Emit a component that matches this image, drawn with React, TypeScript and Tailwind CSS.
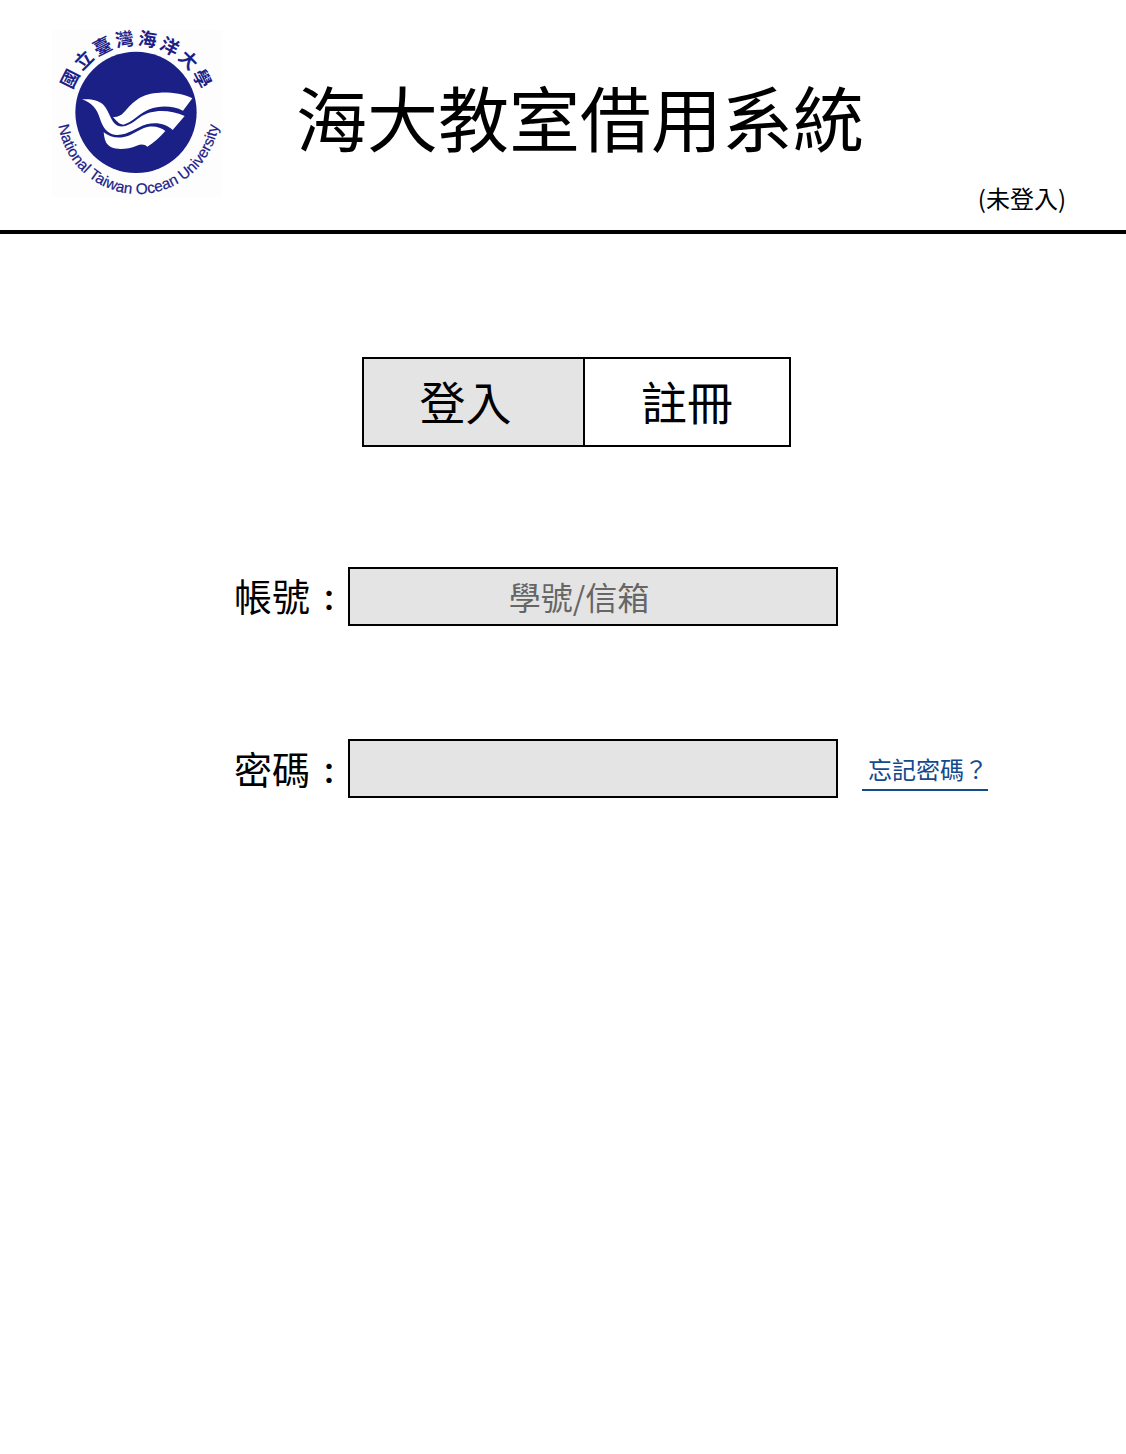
import { useState } from 'react';

const ringCharacters = ['國', '立', '臺', '灣', '海', '洋', '大', '學'];

function UniversityLogo() {
  return (
    <svg
      viewBox="0 0 600 570"
      className="w-[200px] shrink-0"
      role="img"
      aria-label="國立臺灣海洋大學 National Taiwan Ocean University"
    >
      <rect x="36" y="30" width="510" height="500" fill="#fdfdfe" />
      <circle cx="288" cy="277" r="182" fill="#1b2087" />
      <g fill="#ffffff">
        <path d="M219 291 C232 292 242 288 252 277 C280 244 306 219 360 218 C395 217 428 221 457 235 L429 272 C400 258 362 255 328 268 C298 280 276 308 250 314 C236 313 228 300 219 291 Z" />
        <path d="M126 238 C150 236 174 239 190 254 C208 272 211 305 233 317 C255 325 276 309 298 293 C335 267 386 268 434 288 L398 330 C381 313 350 305 320 313 C288 322 265 346 230 345 C200 343 187 318 180 296 C171 267 157 249 126 238 Z" />
        <path d="M191 337 C207 350 227 355 248 352 C277 348 293 328 322 321 C342 317 362 321 376 333 C360 352 341 368 322 380 C313 371 302 372 290 377 C265 387 235 391 214 382 C196 374 193 355 191 337 Z" />
      </g>
      <g
        fill="#1b2087"
        fontSize="55"
        fontWeight="700"
        textAnchor="middle"
        fontFamily="'Noto Sans CJK TC', sans-serif"
      >
        {ringCharacters.map((character, index) => (
          <text
            key={character}
            x="288"
            y="75"
            transform={`rotate(${-63 + index * 18} 288 277)`}
          >
            {character}
          </text>
        ))}
      </g>
      <path id="logo-ring" d="M52 279 A243 243 0 0 0 538 279" fill="none" />
      <text
        fill="#1b2087"
        stroke="#1b2087"
        strokeWidth="0.6"
        fontSize="46"
        textAnchor="middle"
        fontFamily="'Liberation Sans', Arial, sans-serif"
      >
        <textPath href="#logo-ring" startOffset="50%">
          National Taiwan Ocean University
        </textPath>
      </text>
    </svg>
  );
}

function LabelColon() {
  return <span className="inline-block w-[38px] text-center text-[28px] leading-none font-bold">：</span>;
}

export default function App() {
  const [mode, setMode] = useState<'login' | 'register'>('login');

  return (
    <div className="min-h-screen bg-white font-['Noto_Sans_CJK_TC',sans-serif] text-black" lang="zh-Hant">
      <header className="flex items-start border-b-4 border-black pt-5 pr-[60px] pb-5 pl-10">
        <UniversityLogo />
        <h1 className="ml-14 pt-[43px] text-[71px] leading-[104px] whitespace-nowrap">海大教室借用系統</h1>
        <p className="ml-auto self-end pb-[2px] text-2xl leading-5 whitespace-nowrap">(未登入)</p>
      </header>

      <main className="pt-[123px]">
        <div className="grid grid-cols-[362fr_429fr_335fr]">
          <div className="col-start-2 flex border-2 border-black text-[46px] leading-[66px]">
            <button
              type="button"
              aria-pressed={mode === 'login'}
              onClick={() => setMode('login')}
              className="w-[52%] border-r-2 border-black pt-2 pr-4 pb-3 aria-pressed:bg-[#e4e4e4]"
            >
              登入
            </button>
            <button
              type="button"
              aria-pressed={mode === 'register'}
              onClick={() => setMode('register')}
              className="flex-1 pt-2 pb-3 aria-pressed:bg-[#e4e4e4]"
            >
              註冊
            </button>
          </div>
        </div>

        <form className="mt-[120px] grid grid-cols-[348fr_490fr_288fr] items-center gap-y-[113px]">
          <label htmlFor="account" className="pb-1 text-right text-[38px] leading-[54px]">
            帳號<LabelColon />
          </label>
          <input
            id="account"
            type="text"
            placeholder="學號/信箱"
            className="h-[59px] w-full border-2 border-black bg-[#e4e4e4] pr-7 pb-[2px] text-center text-[32px] placeholder:text-[#666666]"
          />
          <label htmlFor="password" className="col-start-1 pb-[2px] text-right text-[38px] leading-[54px]">
            密碼<LabelColon />
          </label>
          <input
            id="password"
            type="password"
            className="h-[59px] w-full border-2 border-black bg-[#e4e4e4] px-4 text-[32px]"
          />
          <a
            href="#forgot"
            className="mt-1 ml-6 justify-self-start border-b-2 border-[#134a8e] pb-[2px] pl-[6px] text-2xl leading-9 whitespace-nowrap text-[#134a8e]"
          >
            忘記密碼？
          </a>
        </form>
      </main>
    </div>
  );
}
